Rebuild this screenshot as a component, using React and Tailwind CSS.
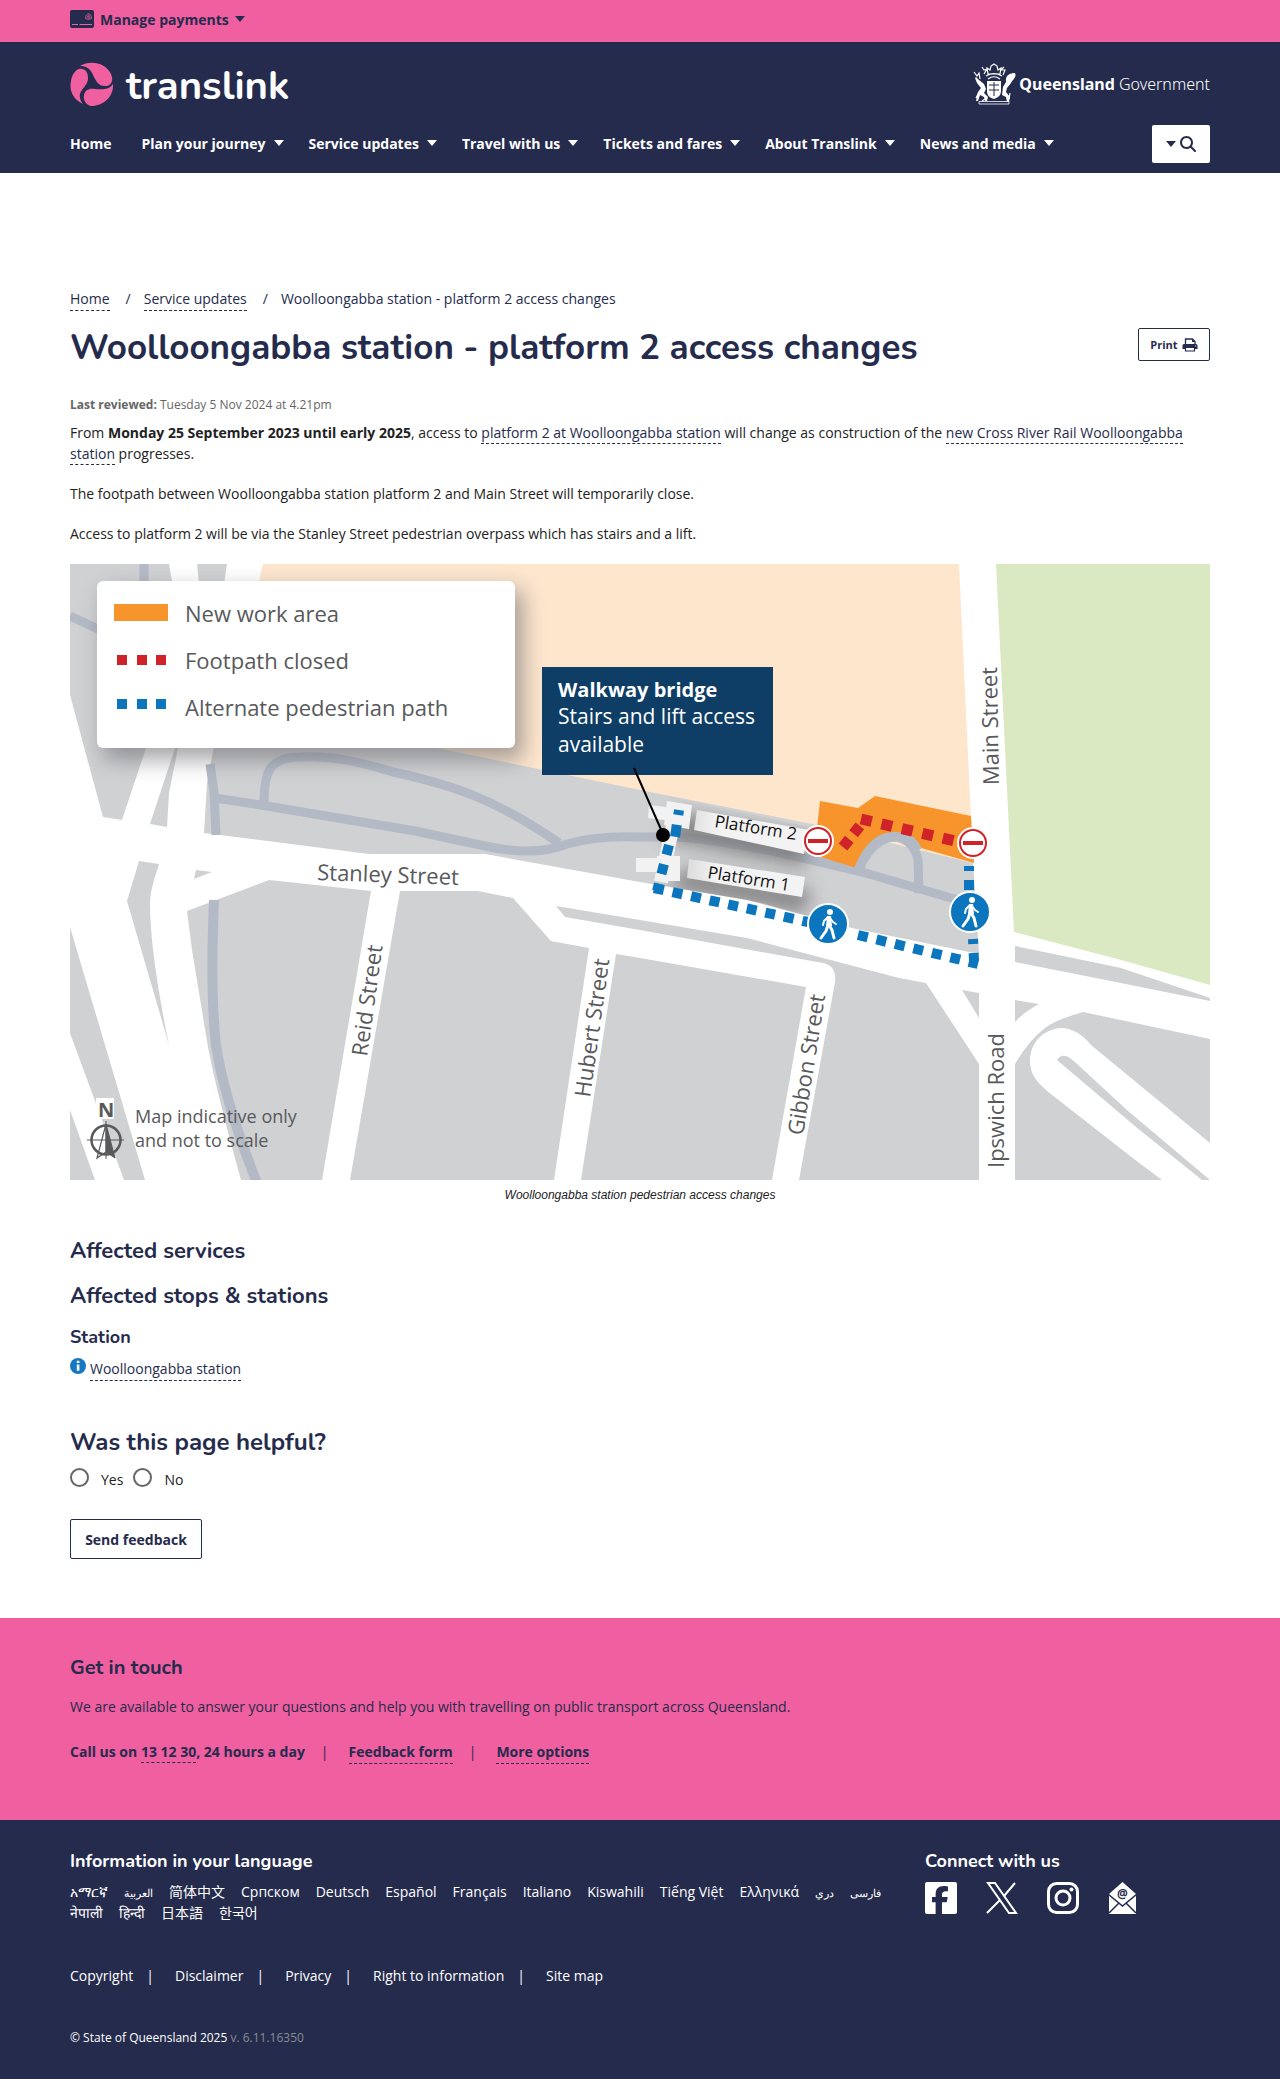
import React from "react";
import { FaFacebookF, FaMagnifyingGlass } from "react-icons/fa6";

const link = "border-b border-dashed border-[#252b4d] pb-px text-[#252b4d]";
const heading = "font-['Nunito','Lato',sans-serif] font-bold text-[#252b4d]";

function Caret({ className = "w-[10px]" }) {
  return (
    <svg viewBox="0 0 10 6" className={`h-[6px] fill-current ${className}`} aria-hidden="true">
      <path d="M0 0h10L5 6z" />
    </svg>
  );
}

function CardIcon() {
  return (
    <svg viewBox="0 0 24 18" className="h-[18px] w-6" aria-hidden="true">
      <rect width="24" height="18" rx="2" fill="#252b4d" />
      <path d="M2 14.5h6M9.500 14.500H22" stroke="#f05fa0" strokeWidth="1" />
      <path d="M15.500 9c0-7 6.500-7 6 0M17 10c0-7 3.500-6 3 0M18.700 6v4" fill="none" stroke="#f05fa0" strokeWidth=".7" />
    </svg>
  );
}

function TranslinkLogo() {
  return (
    <a href="#home" className="flex items-center gap-3 text-white" aria-label="translink">
      <svg viewBox="0 0 44 44" className="size-11" aria-hidden="true">
        <g fill="#f05fa0">
          <path d="M10 4C20-2 35 0 41 12c3 7 0 12-6 12-7 0-9-5-12-11-3-7-7-9-13-9z" />
          <path d="M9 7c6-1 9 3 9 9 0 5-3 8-6 12-4 5-2 10 1 14C3 37-1 29 1 19 2 13 5 8 9 7z" />
          <path d="M43 22c1 12-9 22-22 22-5-1-8-6-7-11 1-5 5-7 11-6 8 1 15 0 18-5z" />
        </g>
      </svg>
      <span className="pt-1 font-['Nunito','Open_Sans',sans-serif] text-[40px] leading-10 font-bold">translink</span>
    </a>
  );
}

function Crest() {
  return (
    <svg viewBox="0 0 44 42" className="h-[42px] w-11" aria-hidden="true">
      <g fill="#fff">
        <path d="M3 14l3 3 5 4 2 5-2 4 4 4-1 4h-2l-1-4-4-2-2 6H3l2-9 3-4-4-5-2-5z" />
        <path d="M33 19c-1-7 4-9 9-9 2 4-2 6-4 10l-4 5-1 4 4 5-1 5h-2l-1-5-4-2 1-8z" />
        <path d="M14 18h14v10c0 5-4 7-7 8-4-1-7-3-7-8z" />
      </g>
      <path d="M16 22h10M21 19v14M16 27h10" stroke="#252b4d" />
      <path d="M1 9l3 4 2-3 1 6M9 4l2 3 3-1-3 5M14 5l3 2 1-4 3-2 3 2 1 4 3-2-1 6H15zM13 13c5-3 11-3 16 0M15 16c4-3 8-3 12 0M31 4l-3 3 4 0-2 5M12 36l-3 2M6 29l-3 6M37 30l-1 6" fill="none" stroke="#fff" strokeWidth="1.200" />
      <path d="M6 38.500h30v2.500H6z" fill="none" stroke="#fff" strokeWidth=".8" />
    </svg>
  );
}

function PrinterIcon() {
  return (
    <svg viewBox="0 0 16 14" className="h-[14px] w-4" aria-hidden="true">
      <path d="M3.500 6V1h7L13 3.500V6" fill="none" stroke="#252b4d" strokeWidth="1.300" />
      <path d="M10 1v3h3z" fill="#252b4d" />
      <path d="M2 6h12a1.500 1.500 0 0 1 1.500 1.500V11h-15V7.500A1.500 1.500 0 0 1 2 6z" fill="#252b4d" />
      <path d="M3.500 9.500h9V13h-9z" fill="#fff" stroke="#252b4d" strokeWidth="1.200" />
      <circle cx="13.700" cy="7.800" r=".6" fill="#fff" />
    </svg>
  );
}

function NoEntry({ x, y }) {
  return (
    <g transform={`translate(${x} ${y})`}>
      <circle r="16" fill="#fff" />
      <circle r="13" fill="#fff" stroke="#cf2229" strokeWidth="2" />
      <path d="M-10-2h20v4h-20z" fill="#cf2229" />
    </g>
  );
}

function Walker({ x, y }) {
  return (
    <g transform={`translate(${x} ${y})`}>
      <circle r="20" fill="#0b76bd" stroke="#fff" strokeWidth="2" />
      <circle cx="2" cy="-12" r="3" fill="#fff" />
      <path d="M0 1l-2 6-5 7M1 1l3 5 2 8" fill="none" stroke="#fff" strokeWidth="3" strokeLinecap="round" strokeLinejoin="round" />
      <path d="M0-7l-4 4-1 4M2-6l3 4 3 2" fill="none" stroke="#fff" strokeWidth="2" strokeLinecap="round" strokeLinejoin="round" />
      <path d="M-1-8h4l1 10h-6z" fill="#fff" />
    </g>
  );
}

const streets = [
  { name: "Stanley Street", at: "translate(317 880) rotate(2)" },
  { name: "Main Street", at: "translate(999 785) rotate(-91)" },
  { name: "Reid Street", at: "translate(367 1057) rotate(-82)" },
  { name: "Hubert Street", at: "translate(590 1098) rotate(-82)" },
  { name: "Gibbon Street", at: "translate(803 1136) rotate(-81)" },
  { name: "Ipswich Road", at: "translate(1004 1168) rotate(-90)" },
];

function StationMap() {
  return (
    <svg viewBox="70 564 1140 616" className="block h-auto w-full font-['Open_Sans',sans-serif]" role="img" aria-label="Woolloongabba station pedestrian access changes">
      <defs>
        <filter id="soft" x="-30%" y="-60%" width="160%" height="220%"><feGaussianBlur stdDeviation="9" /></filter>
        <filter id="cardShadow" x="-10%" y="-20%" width="120%" height="150%"><feGaussianBlur stdDeviation="11" /></filter>
        <clipPath id="mapArea"><path d="M70 564h1140v616H70z" /></clipPath>
        <clipPath id="railYard"><path d="M207 740L437 748 640 790 975 863 979 954 847 927 747 900 640 882 485 854H369L204 833z" /></clipPath>
        <linearGradient id="board"><stop offset="0" stopColor="#dcdcdd" /><stop offset=".25" stopColor="#f3f3f4" /><stop offset="1" stopColor="#f3f3f4" /></linearGradient>
      </defs>
      <g clipPath="url(#mapArea)">
        <path d="M70 564h1140v616H70z" fill="#fff" />
        <g fill="#d0d1d3">
          <path d="M70 564h99l3 17-26 167-24 72-19-3-33-122z" />
          <path d="M197 564h30l-3 20h-25z" />
          <path d="M175 748l-25 76 17 3 2-34 9-45z" />
          <path d="M217 730L437 745 640 785 820 825 972 850 975 890 979 954 847 927 762 903 747 900 640 882 485 854H369L204 833 207 783z" />
          <path d="M70 927l75 253h-21L70 1033zM70 1110l25 70H70z" />
          <path d="M139 861l20 3-5 16q-4 14-4 23 0 50 19 142L127 901z" />
          <path d="M196 870l16 2-18 7z" />
          <path d="M269 880l102 11-49 289h-81q-25-90-33-133L192 950l-5-39z" />
          <path d="M400 891h78l35 7 37 42q2 2 6 2l33 6-35 232H350z" />
          <path d="M616 954l24 4 166 29-34 193H581z" />
          <path d="M556 906l84 14 107 18 152 40 27 5 53 81v116H799l36-198q2-16-12-19l-28-5-155-28-75-13z" />
          <path d="M962 990l17 3v25z" />
          <path d="M1015 946l106 22 89 30v3l-104-21-91-18zM1015 1000l24 4q-15 8-24 18z" />
          <path d="M1083 1012l127 27v141H1015v-116q14-24 30-36 10-8 38-16z" />
        </g>
        <path d="M1210 1143l-119-98q-14-17-30-17c-17 1-31 14-31 33 0 13 6 20 17 30l87 68 28 21h48z" fill="#fff" />
        <path d="M1057 1060q6-10 19 3l52 48 82 69h-8l-66-53z" fill="#d0d1d3" />
        <path d="M263 564h696l12 254 2 45-156-38-177-35-203-42L230 706z" fill="#fee6cd" />
        <path d="M996 564h214v421l-89-25-107-28z" fill="#dae9c2" />
        <g fill="none" stroke="#b3bac6" strokeWidth="9">
          <path d="M144 564v20M70 616l30 14" />
          <path d="M210 764l4 28 2 43" />
          <path d="M214 900q-4 92 2 145 8 54 41 138" strokeWidth="10" />
          <path d="M215 798l52 8 148 25 70 15q50 11 82-2 30-9 73-7h30q38 0 129 20l63 15 96 28" />
          <path d="M264 803c0-30 5-46 35-46 35-2 64 6 94 15 60 13 102 27 166 71" />
          <path d="M858 872q12-32 35-35 19 0 25 22l1 34" />
        </g>
        <g clipPath="url(#railYard)">
          <g filter="url(#soft)" fill="#757375" opacity=".8">
            <path d="M676 812l134 25-6 30-140-28zM684 868l128 22-8 24-136-25z" />
          </g>
        </g>
        <path d="M820 801l38 7 17-12 96 20 3 47-53-15q-12-15-24-15t-25 17l-16 18-42-13z" fill="#f7942c" />
        <path d="M858 869q14-35 39-33 15 0 21 14" fill="none" stroke="#b3bac6" strokeWidth="8" />
        <g fill="url(#board)">
          <path d="M697 810l112 20-5 24-110-24zM689 859l116 18-3 20-115-19z" />
        </g>
        <g fill="#f2f2f2">
          <path d="M649 805l26 3-3 13-24-3zM667 801l25 4-3 24-25-4zM636 858h22v14h-22zM657 856h23v25h-24z" />
        </g>
        <path d="M674 820l-13 62" stroke="#f2f2f2" strokeWidth="14" />
        <g fill="none" stroke="#0b76bd" strokeWidth="10">
          <path d="M679 810l-4 27" strokeDasharray="5 10 12 20" />
          <path d="M669 845l-12 46" strokeDasharray="10 10" />
          <path d="M654 888l154 34M858 935l120 29" strokeDasharray="10 9" />
          <path d="M969 866v30M973 939l1 22" strokeDasharray="5 9 10 9" />
        </g>
        <g fill="none" stroke="#cf2229">
          <path d="M843 847l20-25" strokeWidth="11" strokeDasharray="10 7" />
          <path d="M861 819l98 23" strokeWidth="11" strokeDasharray="11 10" />
        </g>
        <path d="M634 768l29 66" stroke="#000" strokeWidth="2" />
        <circle cx="663" cy="835" r="7" />
        <g fontSize="17" fill="#111">
          <text transform="translate(714 827) rotate(9)">Platform 2</text>
          <text transform="translate(707 878) rotate(9)">Platform 1</text>
        </g>
        <NoEntry x={818} y={841} />
        <NoEntry x={973} y={843} />
        <Walker x={828} y={924} />
        <Walker x={970} y={912} />

        <rect x="103" y="590" width="420" height="170" rx="7" fill="#6b6b70" opacity=".6" filter="url(#cardShadow)" />
        <rect x="97" y="581" width="418" height="167" rx="6" fill="#fff" />
        <path d="M114 604h54v17h-54z" fill="#f7942c" />
        <path d="M117 655h10v10h-10zM137 655h10v10h-10zM156 655h10v10h-10z" fill="#cf2229" />
        <path d="M117 699h10v10h-10zM137 699h10v10h-10zM156 699h10v10h-10z" fill="#0b76bd" />
        <g fontSize="22" fill="#58595b">
          <text x="185" y="622">New work area</text>
          <text x="185" y="669">Footpath closed</text>
          <text x="185" y="716">Alternate pedestrian path</text>
          {streets.map((s) => (
            <text key={s.name} transform={s.at}>{s.name}</text>
          ))}
        </g>
        <path d="M542 667h231v108H542z" fill="#0e3d65" />
        <path d="M634 768l3 7" stroke="#000" strokeWidth="2" />
        <g fontSize="21" fill="#fff">
          <text x="558" y="697" fontSize="20" fontWeight="700">Walkway bridge</text>
          <text x="558" y="724">Stairs and lift access</text>
          <text x="558" y="752">available</text>
        </g>
        <path d="M96 1098h18v21H96z" fill="#fff" />
        <text x="98" y="1117" fontSize="20" fontWeight="700" fill="#58595b">N</text>
        <g fill="none" stroke="#58595b">
          <circle cx="106" cy="1140" r="14.500" strokeWidth="2.500" />
          <path d="M87 1140h37M106 1121v38" />
          <path d="M106 1124l-9 34 9-6" strokeWidth="1.200" />
          <path d="M106 1124l9 34-9-6z" fill="#58595b" />
        </g>
        <g fontSize="18" fill="#58595b">
          <text x="135" y="1123">Map indicative only</text>
          <text x="135" y="1147">and not to scale</text>
        </g>
      </g>
    </svg>
  );
}

function MailIcon() {
  return (
    <svg viewBox="0 0 29 32" className="h-8 w-[29px]" aria-hidden="true">
      <path d="M14.500 0L28 12v20H1V12z" fill="#fff" />
      <path d="M0 12l14.500 12L29 12M1 31l10-10M28 31L18 21" fill="none" stroke="#252b4d" strokeWidth="1.500" />
      <text x="14.500" y="16" fontSize="12" fontWeight="700" textAnchor="middle" fill="#252b4d">@</text>
    </svg>
  );
}

function XIcon() {
  return (
    <svg viewBox="0 0 32 32" className="size-8" aria-hidden="true">
      <path d="M2 1h7l21 30h-7z" fill="none" stroke="#fff" strokeWidth="2" />
      <path d="M29 1L18 14M14 18L1 31" stroke="#fff" strokeWidth="2" />
    </svg>
  );
}

const menu = ["Plan your journey", "Service updates", "Travel with us", "Tickets and fares", "About Translink", "News and media"];
const languages = [
  { name: "አማርኛ" },
  { name: "العربية", small: true },
  { name: "简体中文" },
  { name: "Српском" },
  { name: "Deutsch" },
  { name: "Español" },
  { name: "Français" },
  { name: "Italiano" },
  { name: "Kiswahili" },
  { name: "Tiếng Việt" },
  { name: "Ελληνικά" },
  { name: "دري", small: true },
  { name: "فارسی", small: true },
  { name: "नेपाली" },
  { name: "हिन्दी" },
  { name: "日本語" },
  { name: "한국어" },
];
const legal = ["Copyright", "Disclaimer", "Privacy", "Right to information", "Site map"];
const wrap = "mx-auto w-full max-w-[1140px]";

export default function App() {
  return (
    <div className="bg-white font-['Open_Sans','Noto_Sans_CJK_SC',sans-serif] text-sm leading-[21px] text-[#222]">
      <div className="bg-[#f05fa0]">
        <div className={`${wrap} flex h-[42px] items-center`}>
          <button className="flex items-center gap-[6px] pb-1 font-bold text-[#252b4d]">
            <CardIcon />
            Manage payments
            <Caret />
          </button>
        </div>
      </div>

      <header className="bg-[#252b4d] text-white">
        <div className={wrap}>
          <div className="flex items-center justify-between pt-5">
            <TranslinkLogo />
            <a href="#qld" className="flex items-center gap-[2px] text-base">
              <Crest />
              <span className="font-['Noto_Sans',sans-serif]"><b>Queensland</b> <span className="font-light">Government</span></span>
            </a>
          </div>
          <div className="flex items-center justify-between pt-[19px] pb-[10px]">
            <nav className="flex items-center gap-[25px] pb-[2px] font-bold">
              <a href="#home" className="pr-[5px]">Home</a>
              {menu.map((m) => (
                <button key={m} className="flex items-center gap-2 font-bold">
                  {m}
                  <Caret />
                </button>
              ))}
            </nav>
            <button aria-label="Search" className="flex h-[38px] w-[58px] items-center justify-center gap-1 rounded-xs bg-white text-[#252b4d]">
              <Caret />
              <FaMagnifyingGlass className="size-4" />
            </button>
          </div>
        </div>
      </header>

      <main className={`${wrap} pt-[115px] pb-[59px]`}>
        <nav aria-label="Breadcrumb" className="flex text-[#252b4d]">
          <a href="#home" className={link}>Home</a>
          <span className="pr-[13px] pl-4">/</span>
          <a href="#updates" className={link}>Service updates</a>
          <span className="pr-[13px] pl-4">/</span>
          <span>Woolloongabba station - platform 2 access changes</span>
        </nav>
        <div className="flex items-start justify-between pt-[17px]">
          <h1 className={`${heading} text-[35px] leading-10`}>Woolloongabba station - platform 2 access changes</h1>
          <button className="flex h-[33px] w-[72px] items-center justify-center gap-1 rounded-xs border border-[#252b4d] text-[11px] font-bold text-[#252b4d]">
            Print <PrinterIcon />
          </button>
        </div>
        <p className="pt-[26px] text-xs leading-[22px] text-[#666]"><b>Last reviewed:</b> Tuesday 5 Nov 2024 at 4.21pm</p>
        <div className="flex flex-col gap-[19px] pt-[6px]">
          <p>
            From <b>Monday 25 September 2023 until early 2025</b>, access to <a href="#station" className={link}>platform 2 at Woolloongabba station</a> will change as construction of the <a href="#crr" className={link}>new Cross River Rail Woolloongabba station</a> progresses.
          </p>
          <p>The footpath between Woolloongabba station platform 2 and Main Street will temporarily close.</p>
          <p>Access to platform 2 will be via the Stanley Street pedestrian overpass which has stairs and a lift.</p>
        </div>
        <figure className="pt-5">
          <StationMap />
          <figcaption className="pt-[5px] text-center font-['Liberation_Sans',sans-serif] text-xs leading-[21px] italic">Woolloongabba station pedestrian access changes</figcaption>
        </figure>
        <h2 className={`${heading} pt-[30px] text-[22px] leading-[30px]`}>Affected services</h2>
        <h2 className={`${heading} pt-[15px] text-[22px] leading-[30px]`}>Affected stops &amp; stations</h2>
        <h3 className={`${heading} pt-[14px] text-lg leading-6`}>Station</h3>
        <p className="flex items-start gap-1 pt-[9px]">
          <svg viewBox="0 0 16 16" className="size-4" aria-hidden="true">
            <circle cx="8" cy="8" r="8" fill="#1678c2" />
            <path d="M6.800 2.800h2.600v2.200H6.800zM6.800 6.500h2.600V12.800H6.800z" fill="#fff" />
          </svg>
          <a href="#station" className={link}>Woolloongabba station</a>
        </p>
        <form onSubmit={(e) => e.preventDefault()}>
          <h2 className={`${heading} pt-[45px] text-2xl leading-8`}>Was this page helpful?</h2>
          <div className="flex gap-[10px] pt-[10px]">
            {["Yes", "No"].map((v) => (
              <label key={v} className="flex items-start gap-3">
                <input type="radio" name="helpful" value={v} className="size-[19px] appearance-none rounded-full border-2 border-[#666] checked:bg-[#252b4d]" />
                <span className="pt-px">{v}</span>
              </label>
            ))}
          </div>
          <button type="submit" className="mt-[29px] h-10 w-[132px] rounded-xs border border-[#252b4d] font-bold text-[#252b4d]">Send feedback</button>
        </form>
      </main>

      <section className="bg-[#f05fa0] pt-[38px] pb-14 text-[#252b4d]">
        <div className={wrap}>
          <h2 className={`${heading} text-xl leading-6`}>Get in touch</h2>
          <p className="pt-4">We are available to answer your questions and help you with travelling on public transport across Queensland.</p>
          <p className="flex pt-6 font-bold">
            <span>Call us on <a href="tel:131230" className={link}>13 12 30</a>, 24 hours a day</span>
            <span className="pr-5 pl-4 font-normal">|</span>
            <a href="#feedback" className={link}>Feedback form</a>
            <span className="pr-5 pl-4 font-normal">|</span>
            <a href="#more" className={link}>More options</a>
          </p>
        </div>
      </section>

      <footer className="bg-[#252b4d] pt-[29px] pb-8 text-white">
        <div className={wrap}>
          <div className="grid grid-cols-4">
            <div className="col-span-3">
              <h2 className="font-['Nunito','Lato',sans-serif] text-lg leading-6 font-bold">Information in your language</h2>
              <ul className="flex flex-wrap gap-x-4 pt-[9px] leading-5">
                {languages.map((l) => (
                  <li key={l.name}><a href="#language" className={l.small ? "text-[11px] leading-5" : ""}>{l.name}</a></li>
                ))}
              </ul>
            </div>
            <div>
              <h2 className="font-['Nunito','Lato',sans-serif] text-lg leading-6 font-bold">Connect with us</h2>
              <div className="flex gap-[29px] pt-[9px]">
                <a href="#facebook" aria-label="Facebook" className="flex size-8 items-end justify-end rounded-xs bg-white pr-[3px] text-[#252b4d]"><FaFacebookF className="size-7" /></a>
                <a href="#x" aria-label="X"><XIcon /></a>
                <a href="#instagram" aria-label="Instagram">
                  <svg viewBox="0 0 32 32" className="size-8" fill="none" stroke="#fff" strokeWidth="3" aria-hidden="true">
                    <rect x="1.500" y="1.500" width="29" height="29" rx="8" />
                    <circle cx="16" cy="16" r="7" />
                    <circle cx="24.500" cy="7.500" r="2" fill="#fff" stroke="none" />
                  </svg>
                </a>
                <a href="#mail" aria-label="Email"><MailIcon /></a>
              </div>
            </div>
          </div>
          <ul className="flex pt-[42px]">
            {legal.map((l, i) => (
              <li key={l}>
                <a href="#legal">{l}</a>
                {i < legal.length - 1 && <span className="pr-[21px] pl-[13px]">|</span>}
              </li>
            ))}
          </ul>
          <p className="pt-[41px] text-xs leading-[21px]">© State of Queensland 2025 <span className="text-[#888b95]">v. 6.11.16350</span></p>
        </div>
      </footer>
    </div>
  );
}
